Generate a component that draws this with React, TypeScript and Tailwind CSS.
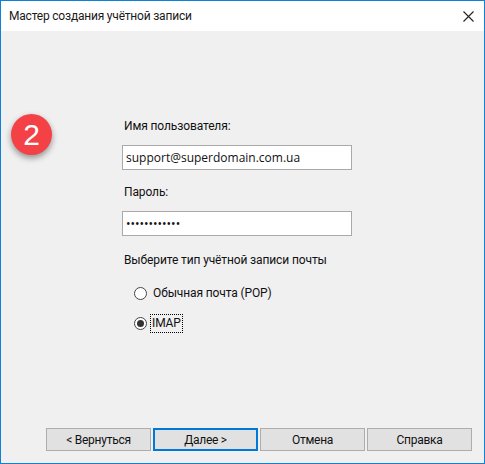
import React from "react";

function Btn({ children, primary }: { children: React.ReactNode; primary?: boolean }) {
  return (
    <button
      className={
        primary
          ? "w-[105px] h-[23px] bg-[#e1e1e1] border-2 border-[#0078d7] text-[12px] tracking-[-0.25px] leading-none text-[#111]"
          : "w-[105px] h-[23px] bg-[#e1e1e1] border border-[#adadad] text-[12px] tracking-[-0.25px] leading-none text-[#111]"
      }
    >
      {children}
    </button>
  );
}

function Radio({ checked }: { checked?: boolean }) {
  return (
    <span className="w-[13px] h-[13px] rounded-full border-[1.5px] border-[#444] bg-white flex items-center justify-center shrink-0">
      {checked && <span className="w-[7px] h-[7px] rounded-full bg-[#333]" />}
    </span>
  );
}

export default function App() {
  return (
    <div className="relative w-[485px] h-[464px] border border-[#0f82d8] bg-[#f0f0f0] flex flex-col font-['Roboto','Open_Sans',sans-serif] text-[12px] tracking-[-0.12px] text-[#111] overflow-hidden">
      <div className="h-[30px] bg-white flex items-center justify-between pl-[8px] pr-[10px] shrink-0">
        <span className="text-[12px] tracking-[-0.2px] text-[#1a1a1a]">Мастер создания учётной записи</span>
        <svg width="11" height="11" viewBox="0 0 11 11" fill="none" stroke="#222" strokeWidth="1.1">
          <path d="M0.5 0.5 L10.5 10.5 M10.5 0.5 L0.5 10.5" />
        </svg>
      </div>

      <div className="flex-1 flex flex-col pl-[121px] pt-[85px]">
        <div className="pl-[2px] h-[20px] leading-[20px]">Имя пользователя:</div>
        <input
          readOnly
          value="support@superdomain.com.ua"
          className="mt-[9px] w-[230px] h-[25px] bg-white border border-[#a9a9a9] px-[3px] text-[12px] tracking-normal font-['Open_Sans',sans-serif] text-[#111] outline-none"
        />
        <div className="mt-[12px] pl-[2px] h-[20px] leading-[20px]">Пароль:</div>
        <input
          readOnly
          type="password"
          value="qwertyuiopas"
          className="mt-[9px] w-[230px] h-[25px] bg-white border border-[#a9a9a9] px-[3px] text-[12px] tracking-normal font-['Open_Sans',sans-serif] text-[#111] outline-none"
        />
        <div className="mt-[14px] pl-[2px] h-[20px] leading-[20px]">Выберите тип учётной записи почты</div>
        <div className="mt-[13px] pl-[12px] flex items-center h-[20px]">
          <Radio />
          <span className="ml-[6px]">Обычная почта (POP)</span>
        </div>
        <div className="mt-[10px] pl-[12px] flex items-center h-[20px]">
          <Radio checked />
          <span className="ml-[3px] h-[19px] leading-[17px] px-[1px] border border-dotted border-black">IMAP</span>
        </div>
      </div>

      <div className="flex justify-end gap-[2px] pr-[12px] pb-[12px] shrink-0">
        <Btn>&lt; Вернуться</Btn>
        <Btn primary>Далее &gt;</Btn>
        <Btn>Отмена</Btn>
        <Btn>Справка</Btn>
      </div>

      <div className="absolute left-[10px] top-[113px] w-[41px] h-[41px] rounded-full bg-[#f44146] shadow-[0_3px_6px_rgba(0,0,0,0.4)] flex items-center justify-center text-white text-[30px] tracking-normal leading-none font-['Liberation_Sans',sans-serif]">
        2
      </div>
    </div>
  );
}
